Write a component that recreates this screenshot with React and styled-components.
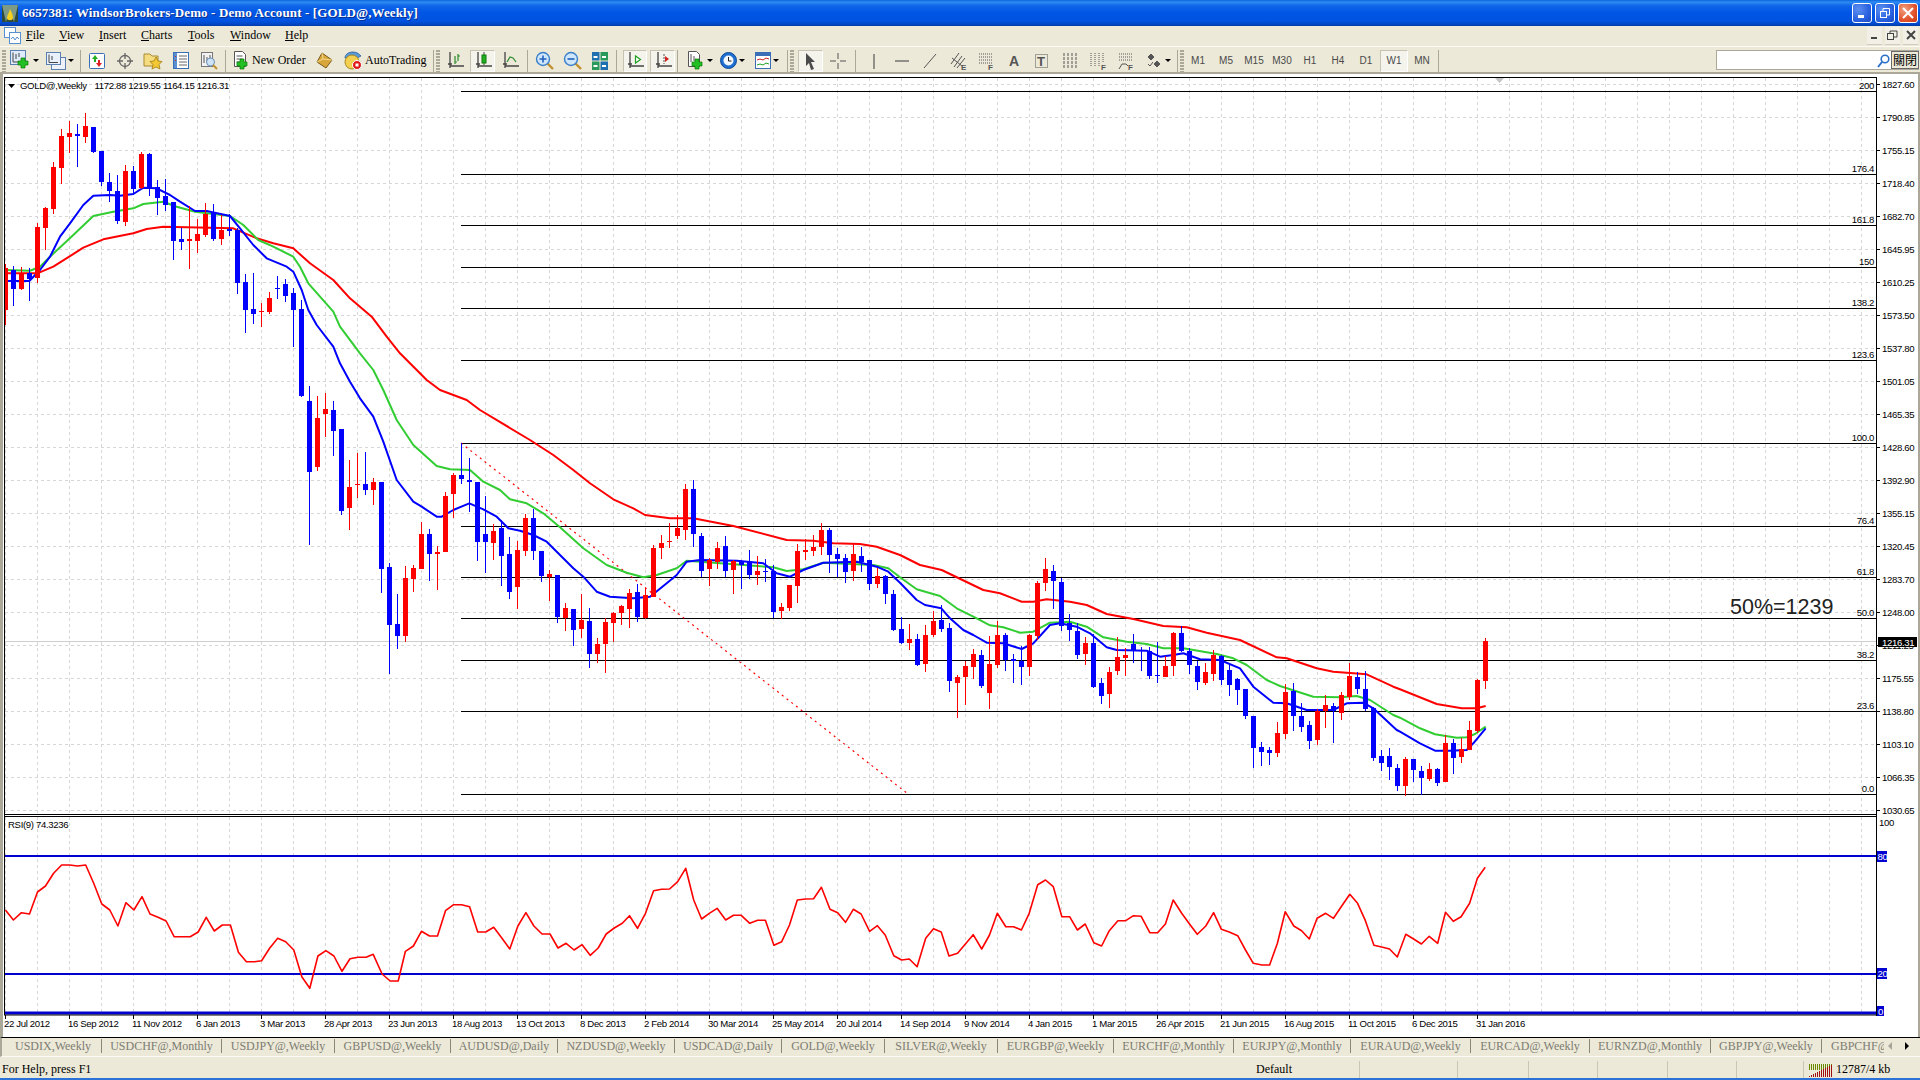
import styled, { createGlobalStyle } from 'styled-components'

const GlobalStyle = createGlobalStyle`
    html, body {
        margin: 0;
        padding: 0;
        background: #ece9d8;
        overflow: hidden;
    }
`

const Window = styled.div`
    display: flex;
    flex-direction: column;
    width: 1920px;
    height: 1080px;
    background: #ece9d8;
    font-family: 'Liberation Serif', serif;
    color: #000;
`
const TitleBar = styled.div`
    display: flex;
    align-items: center;
    flex: 0 0 26px;
    padding: 0 2px;
    box-sizing: border-box;
    background: linear-gradient(180deg, #0a66dc 0%, #2f8cf2 8%, #0f66ea 22%, #0055e5 50%, #0053e0 80%, #0048c8 92%, #003aa8 100%);
`
const TitleText = styled.div`
    margin-left: 4px;
    color: #fff;
    font-size: 13px;
    font-weight: bold;
    letter-spacing: 0.12px;
    white-space: nowrap;
    text-shadow: 1px 1px 0 #0a2f8c;
`
const WinButtons = styled.div`
    display: flex;
    gap: 3px;
    margin-left: auto;
`
const WinButton = styled.div`
    display: flex;
    align-items: center;
    justify-content: center;
    width: 20px;
    height: 20px;
    box-sizing: border-box;
    border: 1px solid #fff;
    border-radius: 3px;
    background: ${(p) =>
        p.$close
            ? 'radial-gradient(circle at 30% 30%, #f0a080, #e2512c 60%, #c43a14)'
            : 'radial-gradient(circle at 30% 30%, #5d8ff0, #2a62e0 60%, #1c48c0)'};
`
const MenuBar = styled.div`
    display: flex;
    align-items: center;
    flex: 0 0 20px;
    box-sizing: border-box;
    padding-bottom: 1px;
    font-size: 12px;
`
const MdiIcon = styled.div`
    display: flex;
    width: 26px;
    padding-left: 4px;
    box-sizing: border-box;
`
const MenuItem = styled.div`
    width: ${(p) => p.$w}px;
    white-space: nowrap;
    u {
        text-decoration: underline;
    }
`
const MdiButtons = styled.div`
    display: flex;
    gap: 3px;
    margin-left: auto;
    margin-right: 2px;
`
const MdiButton = styled.div`
    display: flex;
    align-items: center;
    justify-content: center;
    width: 15px;
    height: 17px;
    background: #f2f0e6;
    border-bottom: 1px solid #d0cdbc;
`
const Toolbar = styled.div`
    display: flex;
    align-items: center;
    flex: 0 0 28px;
    padding: 2px 0 0 2px;
    box-sizing: border-box;
    border-top: 1px solid #fbfaf4;
    border-bottom: 2px solid #aca899;
    font-size: 12px;
`
const Grip = styled.div`
    flex: 0 0 4px;
    height: 22px;
    background: repeating-linear-gradient(180deg, #aca899 0 2px, transparent 2px 3px);
`
const Separator = styled.div`
    flex: 0 0 1px;
    height: 22px;
    margin: 0 2px;
    background: #aca899;
`
const ToolButton = styled.div`
    display: flex;
    align-items: center;
    justify-content: ${(p) => (p.$left ? 'flex-start' : 'center')};
    gap: ${(p) => p.$gap ?? 2}px;
    flex: 0 0 ${(p) => p.$w}px;
    height: 22px;
    margin-left: ${(p) => p.$ml ?? 0}px;
    padding-left: ${(p) => p.$left ?? 0}px;
    box-sizing: border-box;
    ${(p) =>
        p.$pressed &&
        `
    background: #f5f4ec;
    border: 1px solid #c6c3b2;
    border-bottom-color: #fff;
    border-right-color: #fff;
    `}
`
const DropArrow = styled.span`
    width: 0;
    height: 0;
    border-left: 3px solid transparent;
    border-right: 3px solid transparent;
    border-top: 3px solid #000;
`
const ToolLabel = styled.span`
    white-space: nowrap;
`
const TimeFrame = styled(ToolButton)`
    font-family: 'Liberation Sans', sans-serif;
    font-size: 10px;
    color: #4a4a4a;
`
const SearchBox = styled.div`
    position: relative;
    flex: 0 0 203px;
    height: 20px;
    margin-left: auto;
    margin-right: 1px;
    margin-top: -2px;
    box-sizing: border-box;
    background: #fff;
    border: 1px solid #aca899;
`
const SearchGlass = styled.div`
    position: absolute;
    top: 3px;
    right: 28px;
    display: flex;
`
const SearchTip = styled.div`
    position: absolute;
    top: 0;
    right: -1px;
    width: 28px;
    height: 18px;
    box-sizing: border-box;
    border: 1px solid #6a6a6a;
    background: #ece9d8;
    font-family: 'Noto Sans CJK TC', sans-serif;
    font-size: 12px;
    line-height: 16px;
    text-align: center;
    white-space: nowrap;
    overflow: hidden;
`
const ChartWindow = styled.div`
    display: flex;
    flex: 0 0 963px;
    border-left: 3px solid #aca899;
    border-right: 2px solid #aca899;
    background: #fff;
    svg {
        display: block;
    }
`
const SmallText = styled.text`
    font-family: 'Liberation Sans', sans-serif;
    font-size: 9.6px;
    letter-spacing: -0.35px;
    fill: ${(p) => p.$fill ?? '#000'};
`
const NoteText = styled.text`
    font-family: 'Liberation Sans', sans-serif;
    font-size: 21.5px;
    fill: #222;
`
const TabBar = styled.div`
    display: flex;
    align-items: center;
    flex: 0 0 20px;
    box-sizing: border-box;
    padding: 0 0 3px 3px;
    border-top: 1px solid #000;
    border-bottom: 1px solid #fbfaf4;
    border-left: 2px solid #aca899;
    font-size: 12px;
    color: #7c7c72;
    overflow: hidden;
`
const Tab = styled.div`
    flex: 0 0 ${(p) => p.$w}px;
    box-sizing: border-box;
    height: 14px;
    line-height: 14px;
    text-align: ${(p) => (p.$last ? 'left' : 'center')};
    padding-left: ${(p) => (p.$last ? 9 : 0)}px;
    white-space: nowrap;
    overflow: hidden;
    border-right: ${(p) => (p.$last ? 'none' : '1px solid #8a8778')};
`
const TabArrows = styled.div`
    display: flex;
    gap: 13px;
    margin-left: 4px;
    align-items: center;
`
const TabArrow = styled.span`
    width: 0;
    height: 0;
    border-top: 4px solid transparent;
    border-bottom: 4px solid transparent;
    ${(p) => (p.$left ? 'border-right: 4px solid #a8a598;' : 'border-left: 4px solid #000;')}
`
const StatusBar = styled.div`
    display: flex;
    align-items: center;
    flex: 0 0 21px;
    box-sizing: border-box;
    padding-top: 4px;
    font-size: 12px;
`
const Pane = styled.div`
    display: flex;
    align-items: center;
    gap: 3px;
    flex: 0 0 ${(p) => p.$w}px;
    box-sizing: border-box;
    height: 17px;
    padding-left: ${(p) => p.$pad ?? 0}px;
    border-right: ${(p) => (p.$plain ? 'none' : '1px solid #c9c6b6')};
    white-space: nowrap;
`
const BottomEdge = styled.div`
    flex: 0 0 2px;
    background: #2a72d8;
`

// candles read off the reference: [red, wick top, body top, body bottom, wick bottom]
const candles = [
    [1, 264, 268, 310, 325], [0, 266, 270, 289, 306], [1, 267, 273, 289, 290], [0, 268, 273, 279, 301],
    [1, 223, 227, 278, 283], [1, 207, 208, 228, 250], [1, 162, 167, 209, 214], [1, 129, 136, 168, 184],
    [1, 121, 133, 137, 153], [0, 124, 134, 136, 167], [1, 113, 126, 137, 143], [0, 127, 127, 152, 153],
    [0, 151, 151, 182, 186], [0, 173, 182, 191, 202], [0, 175, 191, 221, 224], [1, 165, 171, 222, 226],
    [0, 166, 171, 189, 195], [1, 152, 154, 188, 189], [0, 153, 154, 188, 196], [0, 180, 187, 198, 215],
    [0, 179, 196, 205, 211], [0, 202, 202, 241, 260], [0, 228, 239, 242, 250], [1, 206, 239, 241, 269],
    [1, 219, 234, 241, 253], [1, 203, 214, 235, 237], [0, 204, 213, 239, 241], [1, 215, 230, 239, 245],
    [0, 214, 229, 231, 236], [0, 228, 230, 283, 294], [0, 274, 282, 310, 333], [0, 273, 309, 314, 324],
    [1, 303, 311, 312, 327], [1, 292, 298, 312, 314], [0, 276, 288, 289, 299], [0, 279, 284, 296, 302],
    [0, 288, 293, 310, 347], [0, 300, 309, 396, 397], [0, 386, 401, 472, 545], [1, 396, 418, 467, 471],
    [1, 393, 409, 414, 437], [0, 401, 410, 431, 456], [0, 429, 429, 511, 515], [1, 460, 487, 508, 530],
    [1, 453, 484, 485, 498], [0, 452, 484, 490, 495], [1, 478, 482, 490, 505], [0, 482, 482, 569, 593],
    [0, 563, 567, 625, 674], [0, 594, 624, 636, 649], [1, 566, 578, 636, 642], [1, 565, 568, 579, 592],
    [1, 522, 534, 569, 569], [0, 529, 534, 554, 581], [1, 546, 552, 554, 590], [1, 492, 496, 552, 552],
    [1, 473, 475, 494, 518], [0, 443, 475, 479, 484], [0, 458, 480, 482, 512], [0, 482, 482, 542, 561],
    [0, 496, 534, 542, 573], [1, 524, 531, 543, 560], [0, 520, 528, 556, 586], [0, 537, 554, 592, 599],
    [1, 541, 550, 587, 609], [1, 514, 518, 551, 556], [0, 509, 518, 551, 560], [0, 551, 551, 576, 582],
    [1, 570, 574, 577, 601], [0, 575, 575, 617, 623], [1, 603, 608, 618, 631], [0, 609, 609, 630, 646],
    [1, 594, 620, 629, 638], [0, 608, 621, 654, 668], [1, 638, 644, 654, 663], [1, 618, 622, 644, 673],
    [1, 612, 613, 623, 642], [1, 605, 606, 613, 625], [1, 589, 593, 609, 628], [0, 584, 592, 617, 622],
    [1, 588, 595, 618, 619], [1, 545, 548, 597, 597], [1, 535, 543, 548, 559], [1, 523, 541, 542, 548],
    [1, 515, 528, 536, 539], [1, 484, 489, 530, 540], [0, 480, 489, 534, 547], [0, 533, 536, 571, 577],
    [1, 558, 560, 569, 586], [1, 542, 548, 562, 569], [0, 536, 546, 571, 577], [1, 560, 561, 570, 594],
    [0, 560, 562, 565, 589], [0, 550, 562, 575, 579], [1, 556, 571, 575, 585], [0, 559, 571, 572, 582],
    [0, 565, 571, 612, 618], [1, 603, 607, 611, 619], [1, 585, 585, 608, 611], [1, 544, 551, 586, 603],
    [1, 539, 550, 552, 560], [1, 535, 547, 551, 556], [1, 523, 530, 547, 555], [0, 528, 530, 555, 573],
    [0, 548, 554, 559, 577], [0, 554, 558, 572, 583], [1, 544, 554, 571, 581], [0, 547, 556, 562, 572],
    [0, 560, 560, 584, 590], [1, 568, 576, 584, 588], [0, 575, 576, 594, 604], [0, 590, 594, 630, 631],
    [0, 617, 629, 643, 644], [1, 624, 639, 643, 650], [0, 634, 639, 665, 666], [1, 625, 635, 664, 672],
    [1, 611, 621, 635, 637], [0, 605, 620, 629, 632], [0, 623, 628, 681, 692], [1, 675, 677, 683, 718],
    [1, 661, 666, 677, 705], [1, 649, 654, 667, 679], [0, 650, 655, 686, 688], [1, 636, 664, 693, 709],
    [1, 621, 635, 665, 668], [0, 633, 635, 660, 671], [0, 654, 659, 661, 683], [0, 646, 661, 667, 685],
    [1, 634, 635, 667, 676], [1, 581, 583, 636, 640], [1, 558, 569, 583, 591], [0, 565, 571, 581, 609],
    [0, 578, 582, 626, 631], [0, 614, 623, 630, 641], [0, 623, 631, 655, 659], [1, 637, 643, 654, 665],
    [0, 634, 643, 687, 688], [0, 678, 683, 696, 704], [1, 667, 672, 694, 708], [1, 637, 657, 671, 675],
    [1, 648, 655, 658, 676], [0, 634, 644, 650, 663], [0, 647, 650, 651, 671], [0, 647, 651, 676, 679],
    [0, 642, 675, 676, 683], [1, 656, 666, 677, 677], [1, 632, 633, 666, 676], [0, 626, 633, 651, 652],
    [0, 648, 651, 665, 674], [0, 661, 666, 682, 690], [1, 663, 672, 683, 685], [1, 650, 655, 674, 681],
    [0, 655, 656, 680, 685], [0, 664, 670, 685, 696], [0, 678, 679, 690, 705], [0, 689, 689, 716, 719],
    [0, 716, 716, 748, 768], [0, 742, 747, 752, 766], [0, 747, 750, 753, 765], [1, 722, 733, 753, 757],
    [1, 684, 692, 734, 739], [0, 683, 691, 716, 731], [0, 703, 716, 727, 732], [0, 721, 725, 741, 749],
    [1, 709, 711, 740, 745], [1, 695, 705, 711, 728], [0, 703, 706, 711, 743], [1, 692, 695, 713, 720],
    [1, 663, 676, 697, 700], [0, 672, 677, 689, 694], [0, 671, 689, 709, 711], [0, 707, 708, 758, 761],
    [0, 750, 756, 763, 771], [0, 748, 756, 767, 780], [0, 764, 768, 786, 791], [1, 757, 759, 786, 796],
    [0, 759, 759, 770, 782], [0, 766, 771, 778, 795], [1, 763, 769, 779, 781], [0, 768, 769, 783, 786],
    [1, 735, 743, 782, 782], [0, 739, 743, 758, 774], [1, 738, 749, 757, 763], [1, 721, 730, 750, 750],
    [1, 679, 680, 731, 733], [1, 638, 641, 681, 689],
]

// curve points were read from crops of the picture, so they are kept in crop coordinates
const crop = (ox, oy, pts, sx = 3) => pts.map(([x, y]) => [ox + x / sx, oy + y / 3])

const blueMa = [
    ...crop(0, 80, [[16, 603], [88, 603], [120, 570], [150, 530], [180, 470], [210, 430], [250, 375], [280, 347], [330, 345], [360, 347], [400, 342], [430, 323], [470, 325], [510, 345], [540, 365], [585, 393], [620, 393], [690, 408], [720, 445], [760, 495], [800, 535], [860, 560], [880, 575]]),
    ...crop(0, 200, [[905, 270], [925, 330], [950, 375], [1000, 440], [1020, 490], [1050, 545], [1080, 595], [1120, 650], [1150, 725], [1190, 840], [1240, 905], [1265, 920], [1310, 950], [1325, 950]]),
    ...crop(440, 440, [[40, 210], [88, 190], [130, 208], [170, 230], [205, 265], [240, 272], [280, 285], [320, 305], [360, 345], [400, 385], [430, 410], [470, 455], [510, 470], [580, 475], [630, 470], [680, 430], [710, 405], [740, 365], [780, 360], [890, 362], [970, 370], [1010, 400], [1050, 410], [1090, 390], [1150, 368], [1250, 365], [1310, 380], [1345, 395]]),
    ...crop(900, 520, [[0, 188], [50, 240], [75, 255], [124, 265], [150, 295], [190, 330], [220, 345], [260, 368], [310, 370], [365, 387], [400, 370], [450, 315], [480, 310], [530, 320], [570, 340], [620, 382], [650, 390], [740, 392], [780, 410], [820, 405], [850, 400], [900, 418], [960, 420], [1020, 445], [1060, 500], [1120, 548], [1160, 550], [1220, 570], [1300, 570], [1340, 550], [1390, 548], [1420, 565], [1490, 630]]),
    ...crop(1400, 580, [[0, 455], [60, 490], [105, 512], [150, 512], [200, 510], [220, 490], [257, 445]]),
]
const greenMa = [
    ...crop(0, 80, [[16, 570], [90, 572], [120, 560], [150, 530], [220, 465], [280, 408], [340, 395], [400, 385], [430, 372], [490, 365], [530, 380], [585, 395], [690, 408], [730, 435], [775, 480], [820, 500], [880, 530], [900, 560], [925, 610], [1000, 695], [1020, 740], [1080, 820]]),
    ...crop(0, 200, [[1120, 510], [1150, 570], [1190, 660], [1240, 735], [1310, 798], [1350, 808]]),
    ...crop(440, 440, [[90, 90], [130, 125], [180, 150], [210, 178], [260, 190], [310, 220], [360, 262], [430, 325], [500, 375], [560, 398], [610, 412], [650, 405], [710, 385], [740, 362], [1000, 382], [1040, 393], [1090, 388], [1150, 368], [1300, 375], [1345, 385]]),
    ...crop(900, 520, [[0, 172], [50, 208], [120, 228], [170, 265], [220, 290], [270, 316], [310, 322], [360, 338], [400, 335], [450, 308], [510, 305], [560, 320], [610, 352], [680, 365], [740, 372], [790, 385], [850, 385], [950, 402], [1000, 415], [1040, 435], [1100, 480], [1140, 498], [1240, 530], [1320, 532], [1370, 528], [1410, 540], [1480, 585]]),
    ...crop(1400, 580, [[0, 413], [60, 445], [105, 463], [170, 473], [200, 472], [225, 462], [257, 440]]),
]
const redMa = [
    ...crop(0, 80, [[16, 580], [112, 580], [160, 560], [250, 503], [310, 478], [400, 460], [440, 447], [490, 440], [700, 445], [770, 475], [820, 490], [880, 505], [930, 550], [1000, 600], [1050, 655], [1115, 710], [1160, 770]]),
    ...crop(0, 200, [[1200, 460], [1280, 540], [1320, 570], [1400, 600], [1440, 630]]),
    ...crop(440, 440, [[270, 0], [340, 45], [400, 90], [450, 130], [520, 178], [580, 205], [615, 225], [690, 235], [760, 235], [880, 258], [1040, 300], [1120, 302], [1180, 310], [1260, 312], [1310, 320]]),
    ...crop(900, 520, [[0, 105], [60, 135], [125, 150], [250, 210], [300, 220], [365, 245], [400, 245], [440, 238], [510, 245], [560, 255], [620, 282], [700, 297], [790, 318], [860, 322], [920, 338], [1020, 360], [1130, 412], [1160, 415], [1250, 445], [1300, 455], [1400, 463], [1480, 500]]),
    ...crop(1400, 580, [[0, 328], [110, 372], [185, 385], [230, 385], [257, 378]]),
]
const rsi = [
    ...crop(0, 800, [[12, 330], [30, 360], [48, 338], [66, 342], [84, 276], [102, 258], [120, 220], [138, 195], [156, 195], [174, 198], [192, 195], [210, 250], [228, 312], [246, 330], [264, 378], [282, 308], [300, 330], [318, 290], [336, 342], [354, 352], [372, 363], [390, 410], [408, 410], [426, 410], [444, 396], [462, 352], [480, 393], [498, 375], [516, 375], [534, 457], [552, 485], [570, 485], [586, 482], [604, 445], [622, 415], [640, 425], [658, 450], [676, 530], [694, 565], [712, 468], [730, 452], [748, 468], [766, 514], [784, 476], [802, 472], [820, 472], [836, 463], [856, 522], [874, 543], [892, 543], [908, 454], [926, 438], [944, 394], [962, 408], [980, 408], [998, 332], [1016, 314], [1034, 314], [1052, 320], [1070, 396], [1088, 396], [1106, 382], [1124, 414], [1142, 447], [1160, 378], [1178, 338], [1196, 378], [1214, 402], [1232, 402], [1250, 444], [1268, 430], [1286, 450], [1304, 434], [1322, 466], [1340, 444], [1358, 402], [1376, 384], [1394, 370], [1410, 347], [1428, 385], [1446, 340], [1464, 272], [1482, 268], [1500, 267], [1518, 245], [1536, 205], [1554, 300]], 2.24),
    ...crop(700, 800, [[2, 357], [12, 340], [22, 325], [33, 360], [43, 346], [53, 346], [64, 370], [74, 361], [84, 361], [95, 436], [105, 425], [115, 375], [125, 300], [136, 297], [146, 296], [156, 262], [167, 328], [177, 338], [187, 367], [197, 328], [207, 342], [218, 394], [228, 377], [238, 405], [249, 467], [259, 480], [269, 477], [279, 500], [290, 415], [300, 386], [310, 396], [320, 468], [331, 460], [341, 432], [351, 404], [362, 447], [372, 405], [382, 340], [393, 380], [403, 380], [413, 390], [423, 340], [434, 254], [444, 240], [454, 260], [465, 350], [475, 350], [485, 390], [495, 372], [506, 428], [516, 438], [526, 392], [537, 362], [547, 362], [557, 347], [567, 349], [578, 398], [588, 398], [598, 372], [608, 300], [619, 340], [629, 372], [639, 403], [650, 378], [660, 338], [670, 388], [680, 396], [691, 407], [701, 450], [711, 490], [722, 495], [732, 495], [742, 430], [752, 335], [763, 378], [773, 392], [783, 417], [793, 355], [804, 340], [814, 355], [824, 320], [835, 283], [845, 310], [855, 362], [866, 436], [876, 441], [886, 447], [896, 471], [907, 403], [917, 417], [927, 432], [937, 409], [948, 430], [958, 337], [968, 364], [978, 350], [989, 310], [999, 235], [1009, 202]], 1.285),
]

const prices = ['1827.60', '1790.85', '1755.15', '1718.40', '1682.70', '1645.95', '1610.25', '1573.50', '1537.80', '1501.05', '1465.35', '1428.60', '1392.90', '1355.15', '1320.45', '1283.70', '1248.00', '1211.25', '1175.55', '1138.80', '1103.10', '1066.35', '1030.65']
const dates = ['22 Jul 2012', '16 Sep 2012', '11 Nov 2012', '6 Jan 2013', '3 Mar 2013', '28 Apr 2013', '23 Jun 2013', '18 Aug 2013', '13 Oct 2013', '8 Dec 2013', '2 Feb 2014', '30 Mar 2014', '25 May 2014', '20 Jul 2014', '14 Sep 2014', '9 Nov 2014', '4 Jan 2015', '1 Mar 2015', '26 Apr 2015', '21 Jun 2015', '16 Aug 2015', '11 Oct 2015', '6 Dec 2015', '31 Jan 2016']
const fibs = [['200', 91], ['176.4', 174], ['161.8', 225], ['150', 267], ['138.2', 308], ['123.6', 360], ['100.0', 443], ['76.4', 526], ['61.8', 577], ['50.0', 618], ['38.2', 660], ['23.6', 711], ['0.0', 794]]
const tabs = [['USDIX,Weekly', 97], ['USDCHF@,Monthly', 120], ['USDJPY@,Weekly', 113], ['GBPUSD@,Weekly', 116], ['AUDUSD@,Daily', 107], ['NZDUSD@,Weekly', 117], ['USDCAD@,Daily', 107], ['GOLD@,Weekly', 103], ['SILVER@,Weekly', 113], ['EURGBP@,Weekly', 116], ['EURCHF@,Monthly', 120], ['EURJPY@,Monthly', 117], ['EURAUD@,Weekly', 120], ['EURCAD@,Weekly', 119], ['EURNZD@,Monthly', 121], ['GBPJPY@,Weekly', 111], ['GBPCHF@,Weekly', 62]]
const menu = [['F', 'ile', 33], ['V', 'iew', 40], ['I', 'nsert', 42], ['C', 'harts', 47], ['T', 'ools', 42], ['W', 'indow', 55], ['H', 'elp', 30]]
const frames = ['M1', 'M5', 'M15', 'M30', 'H1', 'H4', 'D1', 'W1', 'MN']

const toPoints = (pts) => pts.map(([x, y]) => `${x.toFixed(1)},${y.toFixed(1)}`).join(' ')

const RIGHT = 1876
const gridXs = Array.from({ length: 59 }, (_, k) => 5.5 + 32 * k)

function Chart() {
    return (
        <svg width="1915" height="963" viewBox="3 74 1915 963">
            <defs>
                <clipPath id="plot">
                    <rect x="5" y="78" width="1871" height="736" />
                </clipPath>
            </defs>

            {prices.map((_, k) => (
                <line key={k} x1="5" x2={RIGHT} y1={84.5 + 33 * k} y2={84.5 + 33 * k} stroke="#d6d6d6" strokeDasharray="3 3" />
            ))}
            {gridXs.map((x) => (
                <g key={x} stroke="#d6d6d6" strokeDasharray="3 3">
                    <line x1={x} x2={x} y1="78" y2="814" />
                    <line x1={x} x2={x} y1="817" y2="1012" />
                </g>
            ))}
            <line x1="5" x2={RIGHT} y1="641.5" y2="641.5" stroke="#cfcfcf" />
            <polygon points="1495,78 1504,78 1499.5,83" fill="#c4c4c4" />

            {fibs.map(([label, y]) => (
                <g key={label}>
                    <line x1="461" x2={RIGHT} y1={y + 0.5} y2={y + 0.5} stroke="#000" />
                    <SmallText x="1874" y={y - 2} textAnchor="end">{label}</SmallText>
                </g>
            ))}
            <line x1="461" y1="443" x2="908" y2="794" stroke="#f00" strokeWidth="1.2" strokeDasharray="2 4" />

            <g clipPath="url(#plot)" fill="none" strokeWidth="2" strokeLinejoin="round">
                <polyline points={toPoints(redMa)} stroke="#f00" />
                <polyline points={toPoints(greenMa)} stroke="#32cd32" />
                <polyline points={toPoints(blueMa)} stroke="#00f" />
            </g>
            <g clipPath="url(#plot)">
                {candles.map(([red, wt, bt, bb, wb], i) => (
                    <g key={i} fill={red ? '#f00' : '#00f'}>
                        <rect x={5 + 8 * i} y={wt} width="1" height={wb - wt} />
                        <rect x={3 + 8 * i} y={bt} width="5" height={Math.max(bb - bt, 1)} />
                    </g>
                ))}
            </g>

            <SmallText x="20" y="89">GOLD@,Weekly</SmallText>
            <SmallText x="94.5" y="89">1172.88 1219.55 1164.15 1216.31</SmallText>
            <polygon points="8,84 15,84 11.5,88" fill="#000" />
            <NoteText x="1730" y="614">50%=1239</NoteText>

            {/* frame and price axis */}
            <line x1="4.5" x2="4.5" y1="77" y2="1015" stroke="#000" />
            <line x1="4" x2={RIGHT + 1} y1="77.5" y2="77.5" stroke="#000" />
            <line x1="4" x2={RIGHT + 1} y1="814.5" y2="814.5" stroke="#000" />
            <line x1="4" x2={RIGHT + 1} y1="816.5" y2="816.5" stroke="#000" />
            <line x1={RIGHT + 0.5} x2={RIGHT + 0.5} y1="77" y2="1016" stroke="#000" />
            {prices.map((p, k) => (
                <g key={p}>
                    <line x1={RIGHT} x2={RIGHT + 4} y1={84.5 + 33 * k} y2={84.5 + 33 * k} stroke="#000" />
                    <SmallText x={RIGHT + 6} y={88 + 33 * k}>{p}</SmallText>
                </g>
            ))}
            <rect x="1878" y="637" width="39" height="10" fill="#000" />
            <SmallText x={RIGHT + 6} y="645.5" $fill="#fff">1216.31</SmallText>

            {/* rsi window */}
            <SmallText x="8" y="828">RSI(9) 74.3236</SmallText>
            <g stroke="#0000d0" strokeWidth="2">
                <line x1="5" x2={RIGHT} y1="856" y2="856" />
                <line x1="5" x2={RIGHT} y1="974" y2="974" />
                <line x1="5" x2={RIGHT} y1="1013" y2="1013" strokeWidth="3" />
            </g>
            <polyline points={toPoints(rsi)} fill="none" stroke="#f00" strokeWidth="1.6" strokeLinejoin="round" />
            <SmallText x={RIGHT + 3} y="826">100</SmallText>
            <rect x={RIGHT + 1} y="851" width="10" height="11" fill="#0000d0" />
            <SmallText x={RIGHT + 1.5} y="860" $fill="#fff">80</SmallText>
            <rect x={RIGHT + 1} y="968" width="10" height="11" fill="#0000d0" />
            <SmallText x={RIGHT + 1.5} y="977" $fill="#fff">20</SmallText>
            <rect x={RIGHT + 1} y="1006" width="7" height="10" fill="#0000d0" />
            <SmallText x={RIGHT + 2} y="1014.5" $fill="#fff">0</SmallText>

            {/* time axis */}
            <line x1="4" x2={RIGHT + 1} y1="1015" y2="1015" stroke="#000" />
            {dates.map((d, k) => (
                <g key={d}>
                    <line x1={5.5 + 64 * k} x2={5.5 + 64 * k} y1="1015" y2="1019" stroke="#000" />
                    <SmallText x={4 + 64 * k} y="1027">{d}</SmallText>
                </g>
            ))}
        </svg>
    )
}

const Axes = () => <path d="M4 1v14h14M2 13h4M4 15v2" fill="none" stroke="#444" strokeWidth="1.3" />
const Plus = ({ x = 9, y = 9 }) => (
    <path d={`M${x + 3} ${y}h4v3h3v4h-3v3h-4v-3h-3v-4h3z`} fill="#22c022" stroke="#0a7a0a" strokeWidth="0.7" />
)

const NewChartIcon = () => (
    <svg width="21" height="21" viewBox="0 0 21 21">
        <rect x="0.5" y="0.5" width="15" height="14" fill="#dfeafa" stroke="#5a7fb0" />
        <path d="M3 2.5v9.5h10M6 4v5M9 3v4" fill="none" stroke="#444" />
        <Plus x={8} y={8} />
    </svg>
)
const ProfileIcon = () => (
    <svg width="20" height="20" viewBox="0 0 20 20">
        <rect x="5.5" y="6.5" width="14" height="12" fill="#eef2f8" stroke="#5a7fb0" />
        <rect x="0.5" y="1.5" width="14" height="12" fill="#e8f0fb" stroke="#5a7fb0" />
        <path d="M3 3.5v8h9M6 5v4" fill="none" stroke="#444" />
    </svg>
)
const WatchIcon = () => (
    <svg width="16" height="18" viewBox="0 0 16 18">
        <rect x="0.5" y="1.5" width="15" height="15" rx="1" fill="#fff" stroke="#3a6fb8" />
        <path d="M6 3l3 4H7v3H5V7H3z" fill="#22b022" />
        <path d="M10 15l-3-4h2V8h2v3h2z" fill="#e02020" />
    </svg>
)
const TargetIcon = () => (
    <svg width="18" height="18" viewBox="0 0 18 18" fill="none" stroke="#666" strokeWidth="1.3">
        <circle cx="9" cy="9" r="5.5" />
        <path d="M9 1v6M9 11v6M1 9h6M11 9h6" />
    </svg>
)
const FolderStarIcon = () => (
    <svg width="20" height="19" viewBox="0 0 20 19">
        <path d="M1 3h6l2 2h6v10H1z" fill="#f6dc80" stroke="#a88a30" />
        <path d="M13 6l2 4 4 .5-3 3 1 4.5-4-2-4 2 1-4.5-3-3 4-.5z" fill="#f4c832" stroke="#a07a10" strokeWidth="0.8" />
    </svg>
)
const TerminalIcon = () => (
    <svg width="16" height="17" viewBox="0 0 16 17">
        <rect x="0.5" y="0.5" width="15" height="16" fill="#fff" stroke="#3a6fb8" />
        <rect x="1" y="1" width="3" height="15" fill="#5a8fd0" />
        <path d="M6 4h8M6 7h8M6 10h8M6 13h8" stroke="#666" />
        <path d="M2.5 4v1M2.5 8v1" stroke="#e02020" />
    </svg>
)
const TesterIcon = () => (
    <svg width="18" height="20" viewBox="0 0 18 20">
        <rect x="1.5" y="1.5" width="11" height="14" fill="#f2f2f2" stroke="#777" />
        <path d="M4 4v8M7 6v5M10 4v6" stroke="#555" />
        <circle cx="10.5" cy="11" r="4" fill="#cfe3f6" stroke="#6a8fb8" />
        <path d="M13 14l4 4" stroke="#c09030" strokeWidth="2" />
    </svg>
)
const OrderIcon = () => (
    <svg width="17" height="22" viewBox="0 0 17 22">
        <path d="M1.5 1.5h8l3 3v12h-11z" fill="#fff" stroke="#555" />
        <path d="M3.5 6h6M3.5 9h6M3.5 12h4" stroke="#555" />
        <Plus x={4} y={9} />
    </svg>
)
const GoldIcon = () => (
    <svg width="17" height="17" viewBox="0 0 17 17">
        <path d="M6 1l10 7-6 8-9-6z" fill="#d9a63c" stroke="#7a5a18" />
        <path d="M6 1l1 6 9 1M7 7l-6 3" fill="none" stroke="#f2d88a" />
    </svg>
)
const AutoIcon = () => (
    <svg width="18" height="21" viewBox="0 0 18 21">
        <path d="M1 8c0-4 4-6 8-6s6 2 8 4l-4 2z" fill="#5a9ad8" stroke="#2a5a98" strokeWidth="0.8" />
        <circle cx="8" cy="12" r="7" fill="#f4d050" stroke="#a88a20" />
        <circle cx="13" cy="15" r="4.5" fill="#e01818" stroke="#fff" />
        <rect x="11.5" y="13.5" width="3" height="3" fill="#fff" />
    </svg>
)
const ChartAxes = ({ children }) => (
    <svg width="18" height="20" viewBox="0 0 18 20" fill="none">
        <Axes />
        {children}
    </svg>
)
const BarIcon = () => (
    <ChartAxes>
        <path d="M9 5v8M9 11h2M12 3v7M12 5h2" stroke="#2a8a2a" strokeWidth="1.2" />
    </ChartAxes>
)
const CandleIcon = () => (
    <ChartAxes>
        <path d="M10 1v3M10 12v2" stroke="#444" />
        <rect x="8" y="4" width="4" height="8" fill="#22b022" stroke="#0a7a0a" />
    </ChartAxes>
)
const LineIcon = () => (
    <ChartAxes>
        <path d="M6 11l3-5 3 1 3 4" stroke="#2a8a2a" strokeWidth="1.2" />
    </ChartAxes>
)
const ZoomIcon = ({ plus }) => (
    <svg width="19" height="20" viewBox="0 0 19 20">
        <path d="M12 12l6 6" stroke="#c09030" strokeWidth="2.4" />
        <circle cx="8" cy="8" r="6.5" fill="#cfe6fa" stroke="#3a7fc8" strokeWidth="1.4" />
        <path d={plus ? 'M4.5 8h7M8 4.5v7' : 'M4.5 8h7'} stroke="#2060c0" strokeWidth="1.6" />
    </svg>
)
const TileIcon = () => (
    <svg width="16" height="18" viewBox="0 0 16 18">
        <rect width="7.5" height="8.5" fill="#1e6fb0" />
        <rect x="8.5" width="7.5" height="8.5" fill="#2a9a5a" />
        <rect y="9.5" width="7.5" height="8.5" fill="#2a9a5a" />
        <rect x="8.5" y="9.5" width="7.5" height="8.5" fill="#1e6fb0" />
        <path d="M1.5 5h4M10 5h4M1.5 14h4M10 14h4" stroke="#fff" strokeWidth="2" />
    </svg>
)
const ScrollIcon = () => (
    <ChartAxes>
        <path d="M9.5 5v7l5-3.5z" fill="#fff" stroke="#22a022" strokeWidth="1.2" />
    </ChartAxes>
)
const ShiftIcon = () => (
    <ChartAxes>
        <path d="M10 3v10" stroke="#555" strokeDasharray="2 1" />
        <path d="M11 5l4 3-4 3z" fill="#d02020" />
    </ChartAxes>
)
const IndicatorIcon = () => (
    <svg width="18" height="22" viewBox="0 0 18 22">
        <path d="M1.5 1.5h8l3 3v12h-11z" fill="#fff" stroke="#555" />
        <path d="M4 4v8M7 6v5" stroke="#555" />
        <Plus x={5} y={9} />
    </svg>
)
const ClockIcon = () => (
    <svg width="17" height="19" viewBox="0 0 17 19">
        <circle cx="8.5" cy="9.5" r="8" fill="#1e6fd0" stroke="#0f4a98" />
        <circle cx="8.5" cy="9.5" r="5" fill="#f4f8ff" />
        <path d="M8.5 6v4h3" fill="none" stroke="#222" />
    </svg>
)
const TemplateIcon = () => (
    <svg width="16" height="17" viewBox="0 0 16 17">
        <rect x="0.5" y="0.5" width="15" height="16" fill="#fff" stroke="#3a6fb8" />
        <rect x="1" y="1" width="14" height="3" fill="#3a6fb8" />
        <path d="M2 8l3-1 3 1 3-2 3 1" fill="none" stroke="#d02020" />
        <path d="M2 13l3-1 3 1 3-2 3 1" fill="none" stroke="#22a022" />
    </svg>
)
const CursorIcon = () => (
    <svg width="12" height="18" viewBox="0 0 12 18">
        <path d="M1 1l9 9H6l3 7-3 1-2-7-3 3z" fill="#4a4a4a" />
    </svg>
)
const CrossIcon = () => (
    <svg width="16" height="16" viewBox="0 0 16 16">
        <path d="M8 0v6M8 10v6M0 8h6M10 8h6" stroke="#555" />
    </svg>
)
const IconFrame = ({ children }) => (
    <svg width="18" height="20" viewBox="0 0 18 20" fill="none" stroke="#555">
        {children}
    </svg>
)
const Flag = styled.text`
    font-family: 'Liberation Sans', sans-serif;
    font-size: ${(p) => p.$size ?? 8}px;
    font-weight: bold;
    fill: #555;
    stroke: none;
`
const drawTools = [
    <IconFrame><path d="M9 3v15" strokeWidth="1.2" /></IconFrame>,
    <IconFrame><path d="M2 10h14" strokeWidth="1.2" /></IconFrame>,
    <IconFrame><path d="M3 17L15 3" /></IconFrame>,
    <IconFrame><path d="M2 13L10 2M5 16L13 5M8 17L16 7M3 7l10 8" /><Flag x="12" y="19">E</Flag></IconFrame>,
    <IconFrame><path d="M2 3h13M2 6h13M2 9h13M2 12h13" strokeDasharray="1 1" /><Flag x="11" y="19">F</Flag></IconFrame>,
    <IconFrame><Flag x="4" y="15" $size={14}>A</Flag></IconFrame>,
    <IconFrame><rect x="2.5" y="3.5" width="12" height="13" strokeDasharray="1 1" /><Flag x="4" y="15" $size={13}>T</Flag></IconFrame>,
    <IconFrame><path d="M3 2v16M7 2v16M11 2v16M15 2v16" strokeDasharray="3 1" /></IconFrame>,
    <IconFrame><path d="M2 2v14M6 2v14M10 2v14M14 2v9" strokeDasharray="1 1" /><Flag x="12" y="19">F</Flag></IconFrame>,
    <IconFrame><path d="M2 3h13M2 6h13M2 9h13" strokeDasharray="1 1" /><path d="M2 18l3-5h4l2 2" /><Flag x="11" y="19">F</Flag></IconFrame>,
]

function App() {
    return (
        <Window>
            <GlobalStyle />
            <TitleBar>
                <svg width="16" height="17" viewBox="0 0 16 17">
                    <rect width="16" height="17" fill="#2f4a38" />
                    <path d="M0 0l4 17L8 6l4 11 4-17z" fill="#7d9a86" />
                    <path d="M8 4c2 4 3 6 3 9s-6 3-6 0 2-5 3-9z" fill="#f4d020" />
                </svg>
                <TitleText>6657381: WindsorBrokers-Demo - Demo Account - [GOLD@,Weekly]</TitleText>
                <WinButtons>
                    <WinButton>
                        <svg width="12" height="12"><rect x="2" y="8" width="6" height="3" fill="#fff" /></svg>
                    </WinButton>
                    <WinButton>
                        <svg width="12" height="12" fill="none" stroke="#fff"><rect x="1.5" y="4.5" width="6" height="6" /><path d="M4 4V1.5h6.5V8H8" /></svg>
                    </WinButton>
                    <WinButton $close>
                        <svg width="12" height="12"><path d="M1 1l10 10M11 1L1 11" stroke="#fff" strokeWidth="2" /></svg>
                    </WinButton>
                </WinButtons>
            </TitleBar>

            <MenuBar>
                <MdiIcon>
                    <svg width="17" height="17" viewBox="0 0 17 17" fill="#fff" stroke="#5a8fd0">
                        <rect x="0.5" y="0.5" width="11" height="10" />
                        <rect x="5.5" y="5.5" width="11" height="11" />
                        <path d="M7 12l2-2 2 3 2-3 2 2" fill="none" />
                    </svg>
                </MdiIcon>
                {menu.map(([first, rest, w]) => (
                    <MenuItem key={first} $w={w}><u>{first}</u>{rest}</MenuItem>
                ))}
                <MdiButtons>
                    <MdiButton><svg width="9" height="9"><rect x="1" y="6" width="6" height="2" fill="#444" /></svg></MdiButton>
                    <MdiButton><svg width="11" height="11" fill="none" stroke="#444"><rect x="0.5" y="3.5" width="6" height="6" /><path d="M3 3V1h7v6H7" /></svg></MdiButton>
                    <MdiButton><svg width="10" height="10"><path d="M1 1l8 8M9 1L1 9" stroke="#444" strokeWidth="2" /></svg></MdiButton>
                </MdiButtons>
            </MenuBar>

            <Toolbar>
                <Grip />
                <ToolButton $w={36}><NewChartIcon /><DropArrow /></ToolButton>
                <ToolButton $w={36}><ProfileIcon /><DropArrow /></ToolButton>
                <Separator />
                <ToolButton $w={28}><WatchIcon /></ToolButton>
                <ToolButton $w={28}><TargetIcon /></ToolButton>
                <ToolButton $w={28}><FolderStarIcon /></ToolButton>
                <ToolButton $w={28}><TerminalIcon /></ToolButton>
                <ToolButton $w={28}><TesterIcon /></ToolButton>
                <Separator />
                <ToolButton $w={80} $left={5}><OrderIcon /><ToolLabel>New Order</ToolLabel></ToolButton>
                <ToolButton $w={33}><GoldIcon /></ToolButton>
                <ToolButton $w={90} $left={3} $gap={3}><AutoIcon /><ToolLabel>AutoTrading</ToolLabel></ToolButton>
                <Separator />
                <Grip />
                <ToolButton $w={30}><BarIcon /></ToolButton>
                <ToolButton $w={25} $pressed><CandleIcon /></ToolButton>
                <ToolButton $w={30}><LineIcon /></ToolButton>
                <Separator />
                <ToolButton $w={28}><ZoomIcon plus /></ToolButton>
                <ToolButton $w={28}><ZoomIcon /></ToolButton>
                <ToolButton $w={28}><TileIcon /></ToolButton>
                <Separator />
                <ToolButton $w={24} $ml={4} $pressed><ScrollIcon /></ToolButton>
                <ToolButton $w={25} $ml={3} $pressed><ShiftIcon /></ToolButton>
                <Separator />
                <ToolButton $w={33} $ml={3}><IndicatorIcon /><DropArrow /></ToolButton>
                <ToolButton $w={33}><ClockIcon /><DropArrow /></ToolButton>
                <ToolButton $w={36}><TemplateIcon /><DropArrow /></ToolButton>
                <Separator />
                <Grip />
                <ToolButton $w={25} $ml={4} $pressed><CursorIcon /></ToolButton>
                <ToolButton $w={30}><CrossIcon /></ToolButton>
                <Separator />
                {drawTools.map((tool, i) => (
                    <ToolButton key={i} $w={28} $ml={i === 0 ? 2 : 0}>{tool}</ToolButton>
                ))}
                <ToolButton $w={35}>
                    <IconFrame><path d="M6 3l3 3-3 3-3-3zM12 10l3 3-3 3-3-3z" fill="#555" /><path d="M3 13l2 2 3-4" /></IconFrame>
                    <DropArrow />
                </ToolButton>
                <Separator />
                <Grip />
                {frames.map((f) => (
                    <TimeFrame key={f} $w={28} $pressed={f === 'W1'}>{f}</TimeFrame>
                ))}
                <Separator />
                <SearchBox>
                    <SearchGlass>
                        <svg width="13" height="14" viewBox="0 0 13 14" fill="none" stroke="#2a6fc8" strokeWidth="1.6">
                            <circle cx="8" cy="5" r="3.8" />
                            <path d="M5 8l-4 5" strokeWidth="2" />
                        </svg>
                    </SearchGlass>
                    <SearchTip>關閉</SearchTip>
                </SearchBox>
            </Toolbar>

            <ChartWindow>
                <Chart />
            </ChartWindow>

            <TabBar>
                {tabs.map(([name, w], i) => (
                    <Tab key={name} $w={w} $last={i === tabs.length - 1}>{name}</Tab>
                ))}
                <TabArrows>
                    <TabArrow $left />
                    <TabArrow />
                </TabArrows>
            </TabBar>

            <StatusBar>
                <Pane $w={1250} $pad={2} $plain>For Help, press F1</Pane>
                <Pane $w={110} $pad={6}>Default</Pane>
                <Pane $w={98} />
                <Pane $w={71} />
                <Pane $w={69} />
                <Pane $w={70} />
                <Pane $w={69} />
                <Pane $w={67} />
                <Pane $w={115} $pad={5} $plain>
                    <svg width="24" height="14" viewBox="0 0 24 14">
                        {Array.from({ length: 12 }, (_, i) => (
                            <g key={i}>
                                <rect x={i * 2} y="1" width="1" height="6" fill="#6a8a00" />
                                <rect x={i * 2} y={13 - i} width="1" height={i + 1} fill="#a01010" />
                            </g>
                        ))}
                    </svg>
                    12787/4 kb
                </Pane>
            </StatusBar>
            <BottomEdge />
        </Window>
    )
}

export default App
